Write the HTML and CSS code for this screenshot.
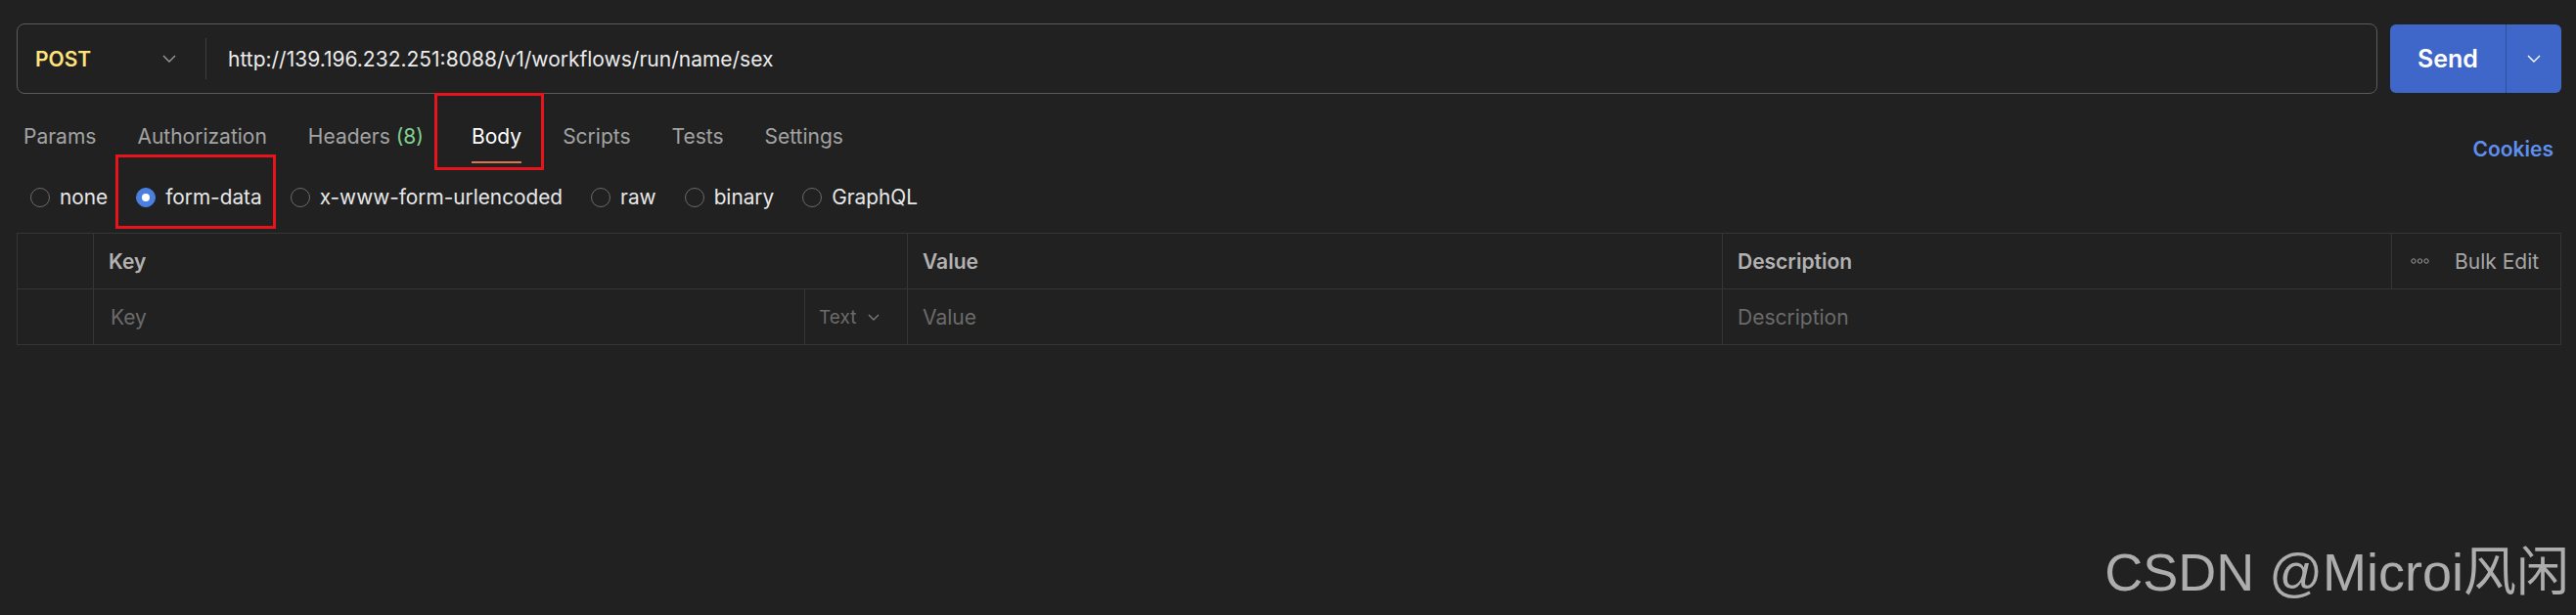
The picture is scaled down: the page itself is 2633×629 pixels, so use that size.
FILE: index.html
```html
<!DOCTYPE html>
<html>
<head>
  <title>POST run/name/sex</title>
  <link rel="stylesheet" href="styles.css">
</head>
<body>

  <div class="app">

    <div class="request-bar">
      <div class="url-box">
        <div class="method">
          <span class="method-name">POST</span>
          <svg class="chevron" width="14" height="8" viewBox="0 0 14 8"><polyline points="1,1 7,7 13,1"/></svg>
        </div>
        <div class="url">http://139.196.232.251:8088/v1/workflows/run/name/sex</div>
      </div>
      <div class="send">
        <span class="send-label">Send</span>
        <span class="send-more">
          <svg class="chevron" width="14" height="8" viewBox="0 0 14 8"><polyline points="1,1 7,7 13,1"/></svg>
        </span>
      </div>
    </div>

    <div class="tabs">
      <nav class="tab-list">
        <span class="tab">Params</span>
        <span class="tab">Authorization</span>
        <span class="tab">Headers <span class="count">(8)</span></span>
        <span class="tab active">Body</span>
        <span class="tab">Scripts</span>
        <span class="tab">Tests</span>
        <span class="tab">Settings</span>
      </nav>
      <span class="cookies">Cookies</span>
    </div>

    <div class="body-types">
      <label class="radio"><span class="dot"></span>none</label>
      <label class="radio"><span class="dot checked"></span>form-data</label>
      <label class="radio"><span class="dot"></span>x-www-form-urlencoded</label>
      <label class="radio"><span class="dot"></span>raw</label>
      <label class="radio"><span class="dot"></span>binary</label>
      <label class="radio"><span class="dot"></span>GraphQL</label>
    </div>

    <div class="kv-table">
      <!-- header row -->
      <div class="cell head"></div>
      <div class="cell head span-key">Key</div>
      <div class="cell head">Value</div>
      <div class="cell head">Description</div>
      <div class="cell head bulk">
        <svg width="19" height="6" viewBox="0 0 19 6"><circle cx="3" cy="3" r="2.2"/><circle cx="9.5" cy="3" r="2.2"/><circle cx="16" cy="3" r="2.2"/></svg>
        <span>Bulk Edit</span>
      </div>
      <!-- empty row -->
      <div class="cell"></div>
      <div class="cell placeholder key-input">Key</div>
      <div class="cell type">
        <span>Text</span>
        <svg class="chevron" width="12" height="7" viewBox="0 0 12 7"><polyline points="1,1 6,6 11,1"/></svg>
      </div>
      <div class="cell placeholder">Value</div>
      <div class="cell placeholder span-desc">Description</div>
    </div>

    <!-- annotations drawn over the screenshot -->
    <div class="mark mark-body"></div>
    <div class="mark mark-form"></div>

    <div class="watermark">CSDN @Microi风闲</div>
  </div>

</body>
</html>
```

FILE: styles.css
```css
body {
  margin: 0;
  background-color: #212121;
  font-family: Inter, "Noto Sans", sans-serif;
  color: #e6e6e6;
}

.app {
  position: relative;
  height: 629px;
  overflow: hidden;
}

.chevron {
  fill: none;
  stroke: #9a9a9a;
  stroke-width: 1.4;
}

/* request bar */
.request-bar {
  display: flex;
  align-items: center;
  gap: 13px;
  padding: 24px 15px 0 17px;
}

.url-box {
  flex: 1;
  display: flex;
  align-items: center;
  height: 72px;
  box-sizing: border-box;
  border: 1px solid #5c5c5c;
  border-radius: 8px;
}

.method {
  display: flex;
  align-items: center;
  justify-content: space-between;
  width: 193px;
  height: 42px;
  box-sizing: border-box;
  padding: 0 30px 0 18px;
  border-right: 1px solid #3d3d3d;
}

.method-name {
  color: #ffe47e;
  font-size: 21px;
  font-weight: 600;
}

.url {
  padding-left: 22px;
  font-size: 21px;
  color: #ececec;
}

.send {
  display: flex;
  width: 175px;
  height: 70px;
  border-radius: 6px;
  background-color: #3f66c9;
  color: white;
}

.send-label {
  width: 118px;
  display: flex;
  align-items: center;
  justify-content: center;
  font-size: 25px;
  font-weight: 600;
  border-right: 1px solid #2d4f9e;
}

.send-more {
  flex: 1;
  display: flex;
  align-items: center;
  justify-content: center;
}

.send-more .chevron {
  stroke: white;
}

/* tabs */
.tabs {
  display: flex;
  justify-content: space-between;
  align-items: flex-end;
  margin-top: 18px;
  padding: 0 23px 0 24px;
}

.tab-list {
  display: flex;
  gap: 42px;
}

.tab {
  font-size: 21px;
  line-height: 26px;
  padding: 13px 0 12px;
  border-bottom: 2px solid transparent;
  color: #a3a3a3;
}

.tab .count {
  color: #7fd08f;
}

.tab.active {
  color: white;
  border-bottom-color: #d9774e;
  margin-left: 7px;
}

.cookies {
  font-size: 21px;
  line-height: 26px;
  padding-bottom: 1px;
  font-weight: 600;
  color: #5e8fee;
}

/* body type radios */
.body-types {
  display: flex;
  align-items: center;
  gap: 29px;
  margin: 22px 0 23px;
  padding-left: 31px;
}

.radio {
  display: flex;
  align-items: center;
  gap: 10px;
  font-size: 20.8px;
  line-height: 26px;
  color: #e8e8e8;
}

.dot {
  width: 20px;
  height: 20px;
  box-sizing: border-box;
  border: 1px solid #6a6a6a;
  border-radius: 50%;
  display: grid;
  place-items: center;
}

.dot.checked {
  background-color: #4b80e3;
  border-color: #4b80e3;
}

.dot.checked::after {
  content: "";
  width: 8px;
  height: 8px;
  border-radius: 50%;
  background-color: white;
}

/* key / value table */
.kv-table {
  display: grid;
  grid-template-columns: 78px 727px 105px 833px 684px 1fr;
  margin: 0 15px 0 17px;
  border: 1px solid #363636;
}

.cell {
  display: flex;
  align-items: center;
  height: 56px;
  box-sizing: border-box;
  padding-left: 15px;
  border-right: 1px solid #363636;
  font-size: 21px;
}

.cell:last-child,
.cell.bulk {
  border-right: none;
}

.cell.head {
  height: 57px;
  border-bottom: 1px solid #363636;
  font-weight: 600;
  color: #b2b2b2;
}

.span-key {
  grid-column: span 2;
}

.span-desc {
  grid-column: span 2;
}

.cell.bulk {
  gap: 26px;
  padding-left: 19px;
  font-weight: 400;
  color: #a6a6a6;
}

.cell.bulk svg {
  fill: none;
  stroke: #9a9a9a;
  stroke-width: 1;
}

.placeholder {
  color: #6b6b6b;
}

.key-input {
  padding-left: 17px;
}

.type {
  gap: 12px;
  padding-left: 14px;
  font-size: 19px;
  color: #6b6b6b;
}

.type .chevron {
  stroke: #7a7a7a;
}

/* red annotation boxes */
.mark {
  position: absolute;
  box-sizing: border-box;
  border: 3px solid #e8141c;
}

.mark-body {
  left: 444px;
  top: 95px;
  width: 112px;
  height: 79px;
}

.mark-form {
  left: 118px;
  top: 158px;
  width: 164px;
  height: 76px;
}

.watermark {
  position: absolute;
  right: 7px;
  top: 558px;
  font-family: "Liberation Sans", "Noto Sans CJK SC", sans-serif;
  font-size: 54px;
  line-height: 54px;
  color: #adadad;
}
```
